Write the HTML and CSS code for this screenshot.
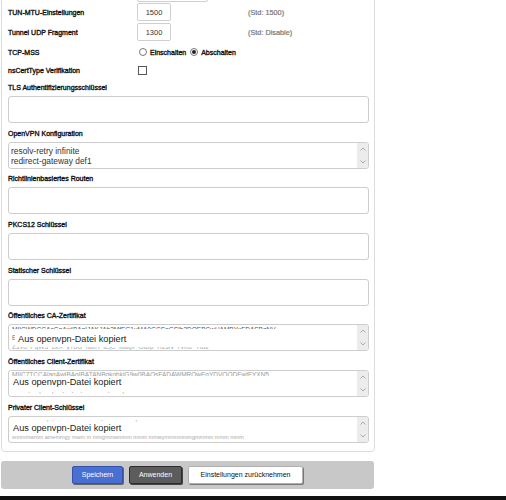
FILE: index.html
```html
<!DOCTYPE html>
<html lang="de">
<head>
<meta charset="utf-8">
<title>OpenVPN Einstellungen</title>
<link rel="stylesheet" href="styles.css">
</head>
<body>
<div class="panel">
  <div class="row row-prev">
    <span class="label"></span>
    <div class="field"><span class="input input-wide"></span></div>
  </div>
  <div class="row">
    <span class="label">TUN-MTU-Einstellungen</span>
    <div class="field"><span class="input input-num">1500</span></div>
    <span class="hint">(Std: 1500)</span>
  </div>
  <div class="row">
    <span class="label">Tunnel UDP Fragment</span>
    <div class="field"><span class="input input-num">1300</span></div>
    <span class="hint">(Std: Disable)</span>
  </div>
  <div class="row">
    <span class="label">TCP-MSS</span>
    <div class="field">
      <span class="radio"></span><span class="opt">Einschalten</span>
      <span class="radio radio-on"></span><span class="opt">Abschalten</span>
    </div>
  </div>
  <div class="row row-short">
    <span class="label">nsCertType Verifikation</span>
    <div class="field"><span class="check"></span></div>
  </div>

  <div class="group group-first">
    <div class="glabel">TLS Authentifizierungsschlüssel</div>
    <div class="ta"></div>
  </div>
  <div class="group">
    <div class="glabel">OpenVPN Konfiguration</div>
    <div class="ta">
      <div class="ta-text">resolv-retry infinite
redirect-gateway def1
persist-key</div>
      <div class="sb"><svg class="chev" viewBox="0 0 6 4" width="6" height="4"><path d="M0.5 3.5 L3 1 L5.5 3.5" fill="none" stroke="#999" stroke-width="0.8"/></svg><svg class="chev" viewBox="0 0 6 4" width="6" height="4"><path d="M0.5 0.5 L3 3 L5.5 0.5" fill="none" stroke="#999" stroke-width="0.8"/></svg></div>
    </div>
  </div>
  <div class="group">
    <div class="glabel">Richtlinienbasiertes Routen</div>
    <div class="ta"></div>
  </div>
  <div class="group">
    <div class="glabel">PKCS12 Schlüssel</div>
    <div class="ta"></div>
  </div>
  <div class="group">
    <div class="glabel">Statischer Schlüssel</div>
    <div class="ta"></div>
  </div>
  <div class="group">
    <div class="glabel">Öffentliches CA-Zertifikat</div>
    <div class="ta">
      <div class="gib gib-ca">
        <div class="gl gl-top">MIICWDCCAcGgAwIBAgIJAKJAb3MfEG1uMA0GCSqGSIb3DQEBCwUAMBYxFDASBgNV</div>
        <div class="gl gl-mid">E</div>
        <div class="gl gl-bot">ZsVo  PqW3  LkX  yTbU  n8rH  iEjC  MaQf  GtDp  R2sN  7vKo  YlBz</div>
      </div>
      <div class="cover cover-ca">Aus openvpn-Datei kopiert</div>
      <div class="sb"><svg class="chev" viewBox="0 0 6 4" width="6" height="4"><path d="M0.5 3.5 L3 1 L5.5 3.5" fill="none" stroke="#999" stroke-width="0.8"/></svg><svg class="chev" viewBox="0 0 6 4" width="6" height="4"><path d="M0.5 0.5 L3 3 L5.5 0.5" fill="none" stroke="#999" stroke-width="0.8"/></svg></div>
    </div>
  </div>
  <div class="group">
    <div class="glabel">Öffentliches Client-Zertifikat</div>
    <div class="ta">
      <div class="gib gib-client">
        <div class="gl gl-top2">MIIC7TCCAlagAwIBAgIBATANBgkqhkiG9w0BAQsFADAWMRQwEgYDVQQDEwtFYXN5</div>
        <div class="gl gl-bot2">         .     ,      ,     .    .    .              .       ,</div>
      </div>
      <div class="cover cover-client">Aus openvpn-Datei kopiert</div>
      <div class="sb"><svg class="chev" viewBox="0 0 6 4" width="6" height="4"><path d="M0.5 3.5 L3 1 L5.5 3.5" fill="none" stroke="#999" stroke-width="0.8"/></svg><svg class="chev" viewBox="0 0 6 4" width="6" height="4"><path d="M0.5 0.5 L3 3 L5.5 0.5" fill="none" stroke="#999" stroke-width="0.8"/></svg></div>
    </div>
  </div>
  <div class="group">
    <div class="glabel">Privater Client-Schlüssel</div>
    <div class="ta">
      <div class="gib gib-key">
        <div class="gl gl-top3">                 ` ,  .                          .                  ,</div>
        <div class="gl gl-bot3">snnmmwmm amemmgy mwm m mmgmmwmmm mmm mmwymmmmmmgmmmm mmm mmm</div>
      </div>
      <div class="cover cover-key">Aus openvpn-Datei kopiert</div>
      <div class="sb"><svg class="chev" viewBox="0 0 6 4" width="6" height="4"><path d="M0.5 3.5 L3 1 L5.5 3.5" fill="none" stroke="#999" stroke-width="0.8"/></svg><svg class="chev" viewBox="0 0 6 4" width="6" height="4"><path d="M0.5 0.5 L3 3 L5.5 0.5" fill="none" stroke="#999" stroke-width="0.8"/></svg></div>
    </div>
  </div>
</div>

<div class="bar">
  <button class="btn btn-blue">Speichern</button>
  <button class="btn btn-dark">Anwenden</button>
  <button class="btn btn-light">Einstellungen zurücknehmen</button>
</div>
<div class="footer"></div>
</body>
</html>
```

FILE: styles.css
```css
html, body {
  margin: 0;
  padding: 0;
  background: #fff;
}
body {
  width: 506px;
  height: 500px;
  overflow: hidden;
  font-family: "Liberation Sans", Arial, sans-serif;
  color: #111;
}

.panel {
  margin: -20px 0 0 1px;
  width: 374px;
  box-sizing: border-box;
  border: 1px solid #dcdcdc;
  border-radius: 0 0 4px 4px;
  padding: 1px 5px 8px 6px;
}

.row {
  display: flex;
  align-items: center;
  height: 20px;
}
.row-prev {
  align-items: flex-end;
}
.row-short {
  height: 16px;
}
.label {
  flex: none;
  width: 129px;
  font-size: 7px;
  color: #111;
  -webkit-text-stroke: 0.35px #111;
  white-space: nowrap;
}
.field {
  flex: none;
  width: 111px;
  display: flex;
  align-items: center;
}
.input {
  box-sizing: border-box;
  height: 18px;
  border: 1px solid #cfcfcf;
  border-radius: 2px;
  background: #fff;
  font-size: 7.5px;
  color: #333;
  display: flex;
  align-items: center;
  justify-content: center;
}
.input-num {
  width: 34px;
}
.input-wide {
  width: 71px;
}
.hint {
  font-size: 7.3px;
  color: #777;
  -webkit-text-stroke: 0.2px #777;
  white-space: nowrap;
}

.radio {
  position: relative;
  box-sizing: border-box;
  width: 8px;
  height: 8px;
  border: 1px solid #777;
  border-radius: 50%;
  margin: 0 3px 0 2px;
  background: #fff;
}
.radio-on {
  margin-left: 4px;
}
.radio-on::after {
  content: "";
  position: absolute;
  left: 1px;
  top: 1px;
  width: 4px;
  height: 4px;
  border-radius: 50%;
  background: #222;
}
.opt {
  font-size: 7px;
  color: #111;
  -webkit-text-stroke: 0.35px #111;
  white-space: nowrap;
}
.check {
  box-sizing: border-box;
  width: 9px;
  height: 9px;
  border: 1px solid #555;
  margin-left: 1px;
  background: #fff;
}

.group {
  margin-bottom: 4.7px;
}
.group:last-child {
  margin-bottom: 0;
}
.group-first {
  margin-top: 4px;
}
.glabel {
  height: 11px;
  line-height: 11px;
  font-size: 7px;
  color: #111;
  -webkit-text-stroke: 0.35px #111;
  margin-bottom: 3px;
  white-space: nowrap;
}
.ta {
  position: relative;
  box-sizing: border-box;
  height: 27px;
  border: 1px solid #cdcdcd;
  border-radius: 3px;
  background: #fff;
  overflow: hidden;
}
.ta-text {
  padding: 3px 14px 0 2px;
  font-size: 8.4px;
  line-height: 10.5px;
  color: #333;
  white-space: pre;
}
.gib {
  padding: 0 14px 0 3px;
  font-size: 6.5px;
  color: #666;
  overflow: hidden;
}
.gl {
  white-space: pre;
  overflow: hidden;
}
.gl-top {
  height: 4px;
  line-height: 9px;
  color: #555;
}
.gl-mid {
  height: 14px;
  line-height: 14px;
  padding-top: 2px;
  color: #777;
}
.gl-bot {
  height: 5px;
  line-height: 3px;
  color: #aaa;
}
.gl-top2 {
  height: 5px;
  line-height: 8px;
  color: #999;
}
.gl-bot2 {
  margin-top: 14px;
  height: 5px;
  line-height: 2px;
  color: #888;
}
.gl-top3 {
  height: 5px;
  line-height: 4px;
  color: #888;
}
.gl-bot3 {
  margin-top: 13px;
  height: 6px;
  line-height: 5px;
  color: #aaa;
  font-size: 5.5px;
}

.sb {
  position: absolute;
  right: 0;
  top: 0;
  bottom: 0;
  width: 11px;
  background: #ececec;
  display: flex;
  flex-direction: column;
  justify-content: space-between;
  align-items: center;
  padding: 4px 0;
  box-sizing: border-box;
}
.chev {
  display: block;
}

.cover {
  position: absolute;
  background: #fff;
  font-size: 9.2px;
  color: #1a1a1a;
  white-space: nowrap;
  box-sizing: border-box;
}
.cover-ca {
  left: 6px;
  right: 12px;
  top: 5px;
  height: 17px;
  padding: 3px 0 0 3px;
  line-height: 12px;
}
.cover-client {
  left: 3px;
  right: 12px;
  top: 6px;
  height: 14px;
  padding: 0 0 0 1px;
  line-height: 11px;
}
.cover-key {
  left: 3px;
  right: 12px;
  top: 5px;
  height: 13px;
  padding: 0 0 0 1px;
  line-height: 12px;
}

.bar {
  margin: 9px 0 0 1px;
  width: 373px;
  height: 28px;
  background: #c8c8c8;
  border-radius: 3px;
  display: flex;
  justify-content: center;
  align-items: center;
  gap: 6px;
}
.btn {
  box-sizing: border-box;
  height: 18px;
  padding: 0;
  margin: 0;
  border-radius: 2px;
  font-family: "Liberation Sans", Arial, sans-serif;
  font-size: 7px;
  display: flex;
  align-items: center;
  justify-content: center;
  cursor: pointer;
}
.btn-blue {
  width: 51px;
  background: #4a6fd2;
  color: #fff;
  border: 1px solid #3253a8;
  box-shadow: 1px 1px 0 #666;
}
.btn-dark {
  width: 53px;
  background: #5c5c5c;
  color: #fff;
  border: 1px solid #2e2e2e;
  box-shadow: 1px 1px 0 #444;
}
.btn-light {
  width: 115px;
  background: #fff;
  color: #111;
  border: 1px solid #b0b0b0;
  box-shadow: 1px 1px 0 #777;
}

.footer {
  margin-top: 7px;
  height: 10px;
  background: #111;
}
```
